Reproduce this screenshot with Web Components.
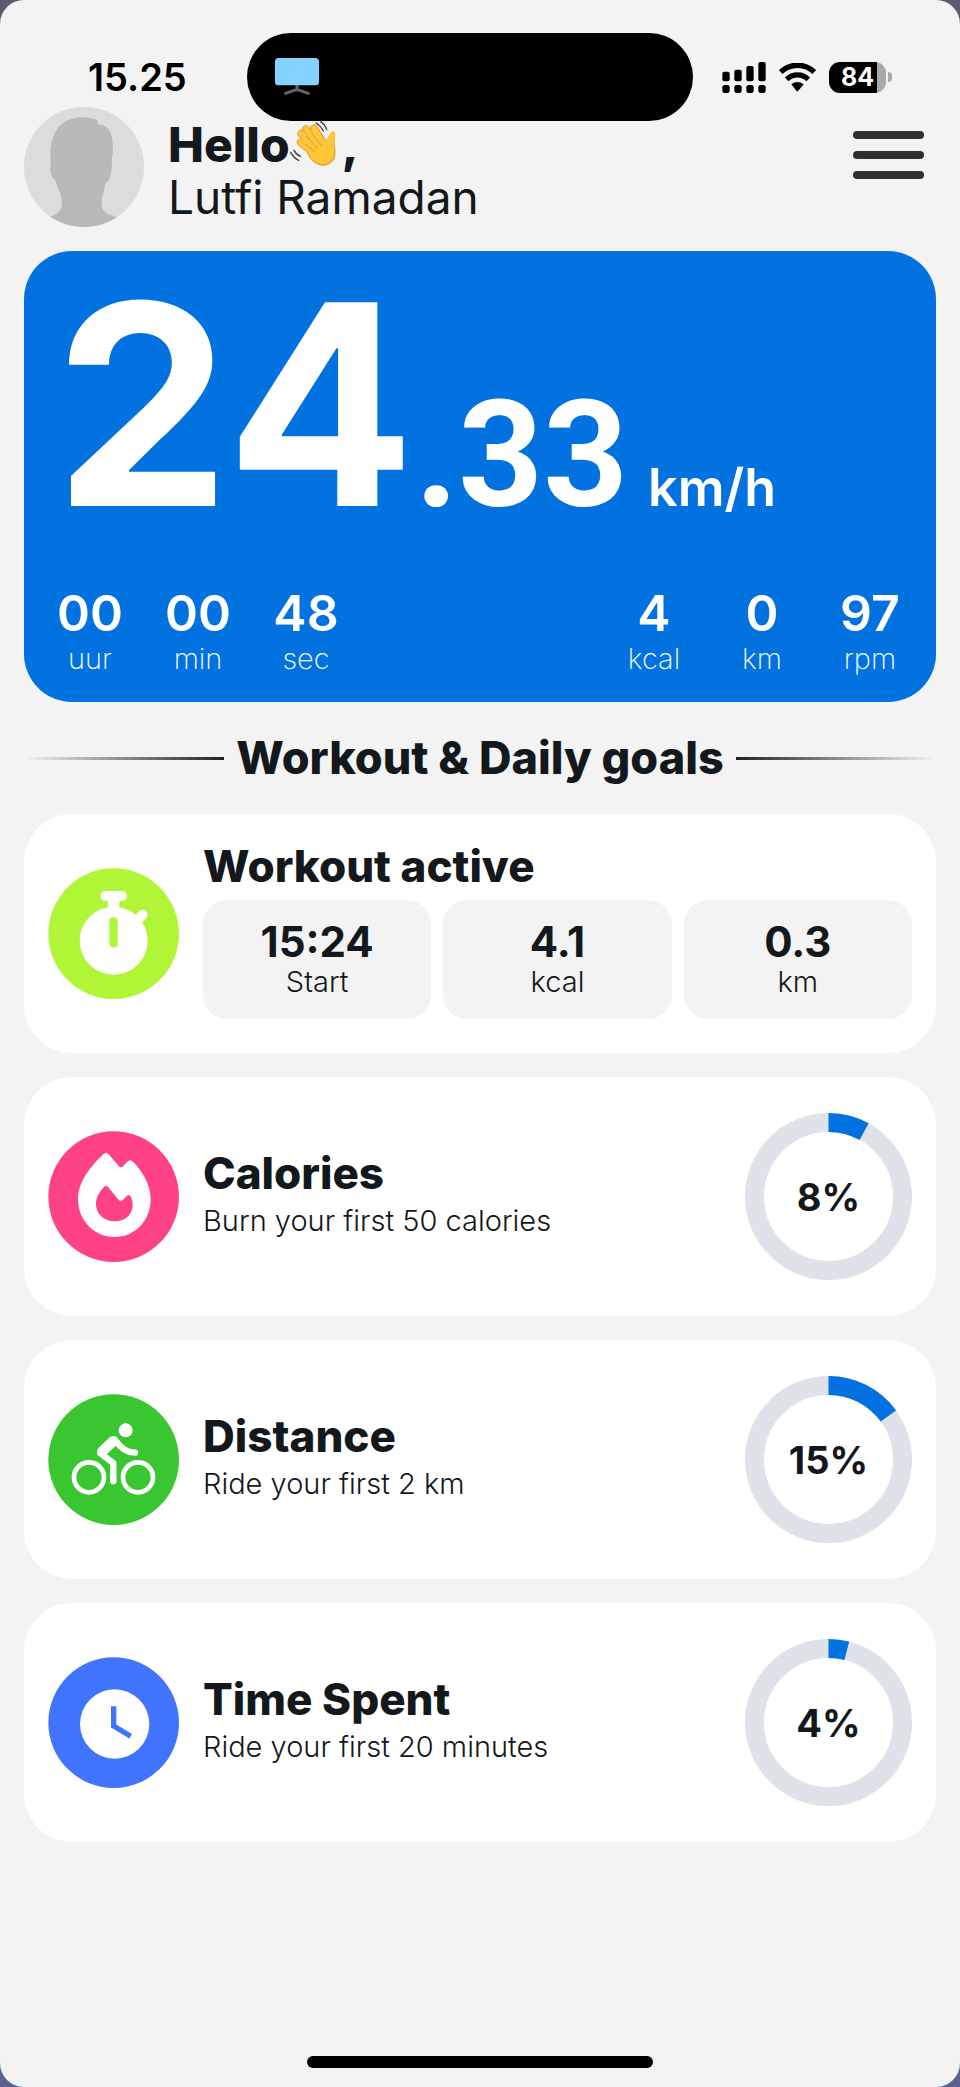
<!DOCTYPE html>
<html lang="en">
<head>
<meta charset="utf-8">
<meta name="viewport" content="width=device-width, initial-scale=1">
<title>Ride dashboard</title>
<style>
    :root {
        --color-primary: #0272e0;
        --color-text: #12181b;
        --color-page: #f3f3f3;
        --color-track: #dfe2e8;
    }

    html {
        background: linear-gradient(#5d5a6e, #5a6390);
    }

    body {
        margin: 0;
        font-family: Inter, "Open Sans", sans-serif;
        color: var(--color-text);
    }
</style>
</head>
<body>
    <ride-app>
        <status-bar slot="status" time="15.25" battery="84"></status-bar>
        <user-header name="Lutfi Ramadan">Hello</user-header>
        <speed-card whole="24" fraction=".33" unit="km/h">
            <ride-stat slot="time" value="00">uur</ride-stat>
            <ride-stat slot="time" value="00">min</ride-stat>
            <ride-stat slot="time" value="48">sec</ride-stat>
            <ride-stat slot="totals" value="4">kcal</ride-stat>
            <ride-stat slot="totals" value="0">km</ride-stat>
            <ride-stat slot="totals" value="97">rpm</ride-stat>
        </speed-card>
        <section-title>Workout &amp; Daily goals</section-title>
        <goal-card icon="stopwatch" heading="Workout active">
            <stat-tile value="15:24">Start</stat-tile>
            <stat-tile value="4.1">kcal</stat-tile>
            <stat-tile value="0.3">km</stat-tile>
        </goal-card>
        <goal-card icon="fire" heading="Calories" text="Burn your first 50 calories">
            <progress-ring slot="end" value="8"></progress-ring>
        </goal-card>
        <goal-card icon="bike" heading="Distance" text="Ride your first 2 km">
            <progress-ring slot="end" value="15"></progress-ring>
        </goal-card>
        <goal-card icon="clock" heading="Time Spent" text="Ride your first 20 minutes">
            <progress-ring slot="end" value="4"></progress-ring>
        </goal-card>
    </ride-app>

<script>
// All badge icons are drawn on the same 393 x 393 disc
const ICONS = {
    stopwatch: {
        color: '#b0f536',
        shape: `
            <circle cx="197" cy="218" r="102"/>
            <rect x="158" y="69" width="78" height="30" rx="13"/>
            <rect x="180" y="90" width="34" height="40"/>
            <path d="M266 158 284 140" stroke="#fff" stroke-width="30" stroke-linecap="round"/>
            <rect x="184" y="148" width="25" height="90" rx="12" fill="#b0f536"/>`
    },
    fire: {
        color: '#ff4186',
        shape: `
            <path d="M166 70Q174 61 182 70L212 105Q219 113 226 105L238 92Q246 83 255 92C282 119 308 160 308 204C308 270 260 318 200 318C140 318 90 270 90 204C90 152 130 104 166 70Z"/>
            <path fill="#ff4186" d="M167 169Q174 161 181 169L210 205Q218 215 227 205L234 197Q243 187 249 198C252 205 254 214 254 222C254 252 230 271 200 271C169 271 144 250 144 219C144 199 155 182 167 169Z"/>`
    },
    bike: {
        color: '#39c631',
        shape: `
            <circle cx="233" cy="109" r="21"/>
            <g fill="none" stroke="#fff" stroke-linecap="round" stroke-linejoin="round">
                <circle cx="123" cy="250" r="45" stroke-width="14"/>
                <circle cx="270" cy="250" r="45" stroke-width="14"/>
                <path stroke-width="31" d="M163 172 195 142"/>
                <path stroke-width="19" d="M201 137Q226 175 261 176"/>
                <path stroke-width="19" d="M157 178 196 207V262"/>
            </g>`
    },
    clock: {
        color: '#4074ff',
        shape: `
            <circle cx="200" cy="201" r="104"/>
            <path d="M197 148V207L248 238" fill="none" stroke="#4074ff" stroke-width="16"/>`
    }
};

class RideApp extends HTMLElement {
    constructor() {
        super();
        this.attachShadow({ mode: 'open' });
        this.shadowRoot.innerHTML = `
            <style>
                :host {
                    display: flex;
                    flex-direction: column;
                    box-sizing: border-box;
                    min-height: 100vh;
                    padding-bottom: 19px;
                    border-radius: 24px;
                    background: var(--color-page);
                }

                main {
                    display: flex;
                    flex-direction: column;
                    gap: 24px;
                    /* the header slides a little under the island */
                    margin-top: -14px;
                    padding: 0 24px 24px;
                }

                .home {
                    width: 36%;
                    height: 12px;
                    margin: auto auto 0;
                    border-radius: 6px;
                    background: #000;
                }
            </style>
            <slot name="status"></slot>
            <main><slot></slot></main>
            <div class="home"></div>
        `;
    }
}

class StatusBar extends HTMLElement {
    constructor() {
        super();
        this.attachShadow({ mode: 'open' });
        this.shadowRoot.innerHTML = `
            <style>
                :host {
                    position: relative;
                    z-index: 1;
                    display: grid;
                    grid-template-columns: 247px 1fr 267px;
                    align-items: center;
                    padding-top: 33px;
                    color: #000;
                }

                time {
                    padding-left: 88px;
                    font-size: 38px;
                    line-height: 36px;
                    font-weight: 600;
                }

                .island {
                    display: flex;
                    align-items: center;
                    height: 88px;
                    padding-left: 28px;
                    border-radius: 44px;
                    background: #000;
                }

                .signals {
                    display: flex;
                    align-items: center;
                    gap: 13px;
                    padding-left: 29px;
                }

                .battery {
                    display: flex;
                    align-items: center;
                    gap: 2px;
                }

                .cell {
                    width: 57px;
                    border-radius: 11px;
                    background: linear-gradient(90deg, #000 84%, #a9a9a9 84%);
                    color: #fff;
                    font-size: 25px;
                    line-height: 31px;
                    font-weight: 700;
                    text-align: center;
                }

                .nub {
                    width: 4px;
                    height: 10px;
                    border-radius: 0 4px 4px 0;
                    background: #a9a9a9;
                }
            </style>
            <time></time>
            <div class="island">
                <svg width="44" height="38" viewBox="0 0 132 114">
                    <path d="M66 80v16M66 94 32 106M66 94 100 106" stroke="#666" stroke-width="9" stroke-linecap="round"/>
                    <rect width="132" height="82" rx="11" fill="#84d2ff"/>
                </svg>
            </div>
            <div class="signals">
                <svg width="44" height="31" viewBox="0 0 132 93">
                    <rect x="1" y="29" width="22" height="29" rx="6"/>
                    <rect x="37" y="23" width="22" height="35" rx="6"/>
                    <rect x="73" y="12" width="22" height="46" rx="6"/>
                    <rect x="109" width="22" height="58" rx="6"/>
                    <rect x="1" y="69" width="22" height="24" rx="7"/>
                    <rect x="37" y="69" width="22" height="24" rx="7"/>
                    <rect x="73" y="69" width="22" height="24" rx="7"/>
                    <rect x="109" y="69" width="22" height="24" rx="7"/>
                </svg>
                <svg width="37" height="29" viewBox="0 0 111 87">
                    <path d="M5 27C33 0 78 0 106 27M23 49C42 31 69 31 88 49" fill="none" stroke="#000" stroke-width="16"/>
                    <path d="M37 64Q55 50 74 64L58 83Q55 86 52 83Z"/>
                </svg>
                <div class="battery"><div class="cell"></div><div class="nub"></div></div>
            </div>
        `;
    }

    connectedCallback() {
        this.shadowRoot.querySelector('time').textContent = this.getAttribute('time');
        this.shadowRoot.querySelector('.cell').textContent = this.getAttribute('battery');
    }
}

class UserHeader extends HTMLElement {
    constructor() {
        super();
        this.attachShadow({ mode: 'open' });
        this.shadowRoot.innerHTML = `
            <style>
                :host {
                    display: flex;
                    align-items: flex-start;
                    gap: 24px;
                }

                .avatar {
                    flex: none;
                    border-radius: 50%;
                    background: #dcdcdc;
                }

                .names {
                    flex: 1;
                    padding-top: 12px;
                }

                .hello {
                    display: flex;
                    align-items: center;
                    font-size: 48px;
                    line-height: 52px;
                    font-weight: 800;
                }

                .hello span {
                    padding-left: 4px;
                }

                .name {
                    font-size: 46px;
                    line-height: 52px;
                    font-weight: 400;
                }

                button {
                    display: grid;
                    gap: 12px;
                    margin: 24px 12px 0 0;
                    padding: 0;
                    border: 0;
                    background: none;
                    cursor: pointer;
                }

                button span {
                    width: 71px;
                    height: 8px;
                    border-radius: 4px;
                    background: #2f2f2f;
                }
            </style>
            <svg class="avatar" width="120" height="120" viewBox="0 0 359 359">
                <path fill="#b9b9b9" d="M80 163C74 90 100 31 175 31C195 31 210 35 220 40L222 54C235 48 262 60 265 105C268 135 264 150 262 163C266 180 258 205 255 219C248 222 246 225 243 232C240 260 232 265 232 285C230 315 250 320 279 330L279 359H78V330C100 318 115 315 113 280C110 250 98 240 94 218C82 215 76 190 80 163Z"/>
            </svg>
            <div class="names">
                <div class="hello">
                    <slot></slot>
                    <svg width="48" height="52" viewBox="0 0 144 156" fill="none" stroke-linecap="round" stroke-linejoin="round">
                        <g stroke="#e59a1c" stroke-width="23">
                            <path d="M86 102 34 44M96 92 48 30M110 88 72 28M82 112 32 70"/>
                        </g>
                        <path d="M128 46C110 76 112 66 84 76L54 92C66 126 90 136 104 134C136 126 132 96 128 84C126 72 130 60 128 46Z" fill="#ffc63b" stroke="#f0a827" stroke-width="13"/>
                        <g stroke="#ffc63b" stroke-width="18">
                            <path d="M82 112 32 70M86 102 34 44M96 92 48 30M106 84 72 28"/>
                        </g>
                        <path d="M129 44C112 76 108 70 84 80L62 96C72 124 90 130 102 128C130 122 126 98 124 84C123 70 128 60 129 44Z" fill="#ffc63b" stroke="#ffc63b" stroke-width="14"/>
                        <path d="M50 52 82 88M66 44 94 80M46 76 74 98" stroke="#e59a1c" stroke-width="3"/>
                        <path d="M2 100Q10 116 26 124M12 94Q18 106 32 112M78 12Q92 20 100 36M92 8Q106 18 110 32" stroke="#444" stroke-width="4"/>
                    </svg>
                    <span>,</span>
                </div>
                <div class="name"></div>
            </div>
            <button aria-label="Menu"><span></span><span></span><span></span></button>
        `;
    }

    connectedCallback() {
        this.shadowRoot.querySelector('.name').textContent = this.getAttribute('name');
    }
}

class SpeedCard extends HTMLElement {
    constructor() {
        super();
        this.attachShadow({ mode: 'open' });
        this.shadowRoot.innerHTML = `
            <style>
                :host {
                    display: block;
                    padding: 40px 24px 24px;
                    border-radius: 48px;
                    background: var(--color-primary);
                    color: #fff;
                }

                .speed {
                    display: flex;
                    align-items: baseline;
                    padding-left: 6px;
                    font-weight: 600;
                }

                .whole {
                    font-size: 280px;
                    line-height: 228px;
                    font-weight: 700;
                }

                .fraction {
                    font-family: Roboto, sans-serif;
                    font-size: 148px;
                    line-height: 148px;
                    font-weight: 700;
                }

                .unit {
                    padding-left: 20px;
                    font-size: 52px;
                    line-height: 52px;
                }

                .stats {
                    display: flex;
                    justify-content: space-between;
                    padding-top: 56px;
                }

                .group {
                    display: flex;
                    gap: 24px;
                }
            </style>
            <div class="speed">
                <span class="whole"></span><span class="fraction"></span><span class="unit"></span>
            </div>
            <div class="stats">
                <div class="group"><slot name="time"></slot></div>
                <div class="group"><slot name="totals"></slot></div>
            </div>
        `;
    }

    connectedCallback() {
        for (const part of ['whole', 'fraction', 'unit']) {
            this.shadowRoot.querySelector('.' + part).textContent = this.getAttribute(part);
        }
    }
}

class RideStat extends HTMLElement {
    constructor() {
        super();
        this.attachShadow({ mode: 'open' });
        this.shadowRoot.innerHTML = `
            <style>
                :host {
                    display: block;
                    min-width: 84px;
                    text-align: center;
                    font-size: 29px;
                    line-height: 38px;
                    font-weight: 200;
                }

                b {
                    display: block;
                    font-size: 50px;
                    line-height: 54px;
                    font-weight: 600;
                }
            </style>
            <b></b>
            <slot></slot>
        `;
    }

    connectedCallback() {
        this.shadowRoot.querySelector('b').textContent = this.getAttribute('value');
    }
}

class SectionTitle extends HTMLElement {
    constructor() {
        super();
        this.attachShadow({ mode: 'open' });
        this.shadowRoot.innerHTML = `
            <style>
                :host {
                    display: flex;
                    align-items: center;
                    gap: 12px;
                    padding: 8px 0;
                }

                h2 {
                    margin: 0;
                    font-size: 45px;
                    line-height: 48px;
                    font-weight: 800;
                }

                span {
                    flex: 1;
                    height: 3px;
                    background: linear-gradient(90deg, transparent, #222);
                }

                span:last-child {
                    background: linear-gradient(270deg, transparent, #222);
                }
            </style>
            <span></span>
            <h2><slot></slot></h2>
            <span></span>
        `;
    }
}

class GoalCard extends HTMLElement {
    constructor() {
        super();
        this.attachShadow({ mode: 'open' });
        this.shadowRoot.innerHTML = `
            <style>
                :host {
                    display: flex;
                    align-items: center;
                    gap: 24px;
                    box-sizing: border-box;
                    min-height: 239px;
                    padding: 24px;
                    border-radius: 48px;
                    background: #fff;
                }

                svg {
                    flex: none;
                }

                .body {
                    flex: 1;
                }

                h3 {
                    margin: 0;
                    font-size: 44px;
                    line-height: 36px;
                    font-weight: 800;
                }

                p {
                    margin: 12px 0 0;
                    font-size: 29px;
                    line-height: 36px;
                    font-weight: 300;
                }

                .tiles {
                    display: grid;
                    grid-auto-flow: column;
                    grid-auto-columns: 1fr;
                    gap: 12px;
                    margin-top: 16px;
                }
            </style>
            <svg width="131" height="131" viewBox="0 0 393 393" fill="#fff"></svg>
            <div class="body">
                <h3></h3>
            </div>
            <slot name="end"></slot>
        `;
    }

    connectedCallback() {
        const icon = ICONS[this.getAttribute('icon')];
        const body = this.shadowRoot.querySelector('.body');
        this.shadowRoot.querySelector('svg').innerHTML =
            `<circle cx="197" cy="197" r="196" fill="${icon.color}"/>${icon.shape}`;
        this.shadowRoot.querySelector('h3').textContent = this.getAttribute('heading');

        // A goal has a line of text, the active workout has tiles instead
        if (this.hasAttribute('text')) {
            const text = document.createElement('p');
            text.textContent = this.getAttribute('text');
            body.appendChild(text);
        } else {
            const tiles = document.createElement('div');
            tiles.className = 'tiles';
            tiles.appendChild(document.createElement('slot'));
            body.appendChild(tiles);
        }
    }
}

class StatTile extends HTMLElement {
    constructor() {
        super();
        this.attachShadow({ mode: 'open' });
        this.shadowRoot.innerHTML = `
            <style>
                :host {
                    display: block;
                    padding: 20px 12px 19px;
                    border-radius: 24px;
                    background: var(--color-page);
                    text-align: center;
                    font-size: 29px;
                    line-height: 36px;
                    font-weight: 300;
                }

                b {
                    display: block;
                    font-size: 42px;
                    line-height: 44px;
                    font-weight: 700;
                }
            </style>
            <b></b>
            <slot></slot>
        `;
    }

    connectedCallback() {
        this.shadowRoot.querySelector('b').textContent = this.getAttribute('value');
    }
}

class ProgressRing extends HTMLElement {
    constructor() {
        super();
        this.attachShadow({ mode: 'open' });
        this.shadowRoot.innerHTML = `
            <style>
                :host {
                    display: grid;
                    place-items: center;
                    flex: none;
                }

                svg, span {
                    grid-area: 1 / 1;
                }

                circle {
                    fill: none;
                    stroke: var(--color-track);
                    stroke-width: 19px;
                }

                .value {
                    stroke: var(--color-primary);
                }

                span {
                    font-size: 38px;
                    line-height: 40px;
                    font-weight: 700;
                }
            </style>
            <svg width="167" height="167" viewBox="0 0 167 167">
                <circle cx="83.5" cy="83.5" r="74"/>
                <circle class="value" cx="83.5" cy="83.5" r="74" pathLength="100" transform="rotate(-90 83.5 83.5)"/>
            </svg>
            <span></span>
        `;
    }

    connectedCallback() {
        const value = this.getAttribute('value');
        this.shadowRoot.querySelector('.value').setAttribute('stroke-dasharray', `${value} 100`);
        this.shadowRoot.querySelector('span').textContent = value + '%';
    }
}

customElements.define('ride-app', RideApp);
customElements.define('status-bar', StatusBar);
customElements.define('user-header', UserHeader);
customElements.define('speed-card', SpeedCard);
customElements.define('ride-stat', RideStat);
customElements.define('section-title', SectionTitle);
customElements.define('goal-card', GoalCard);
customElements.define('stat-tile', StatTile);
customElements.define('progress-ring', ProgressRing);
</script>
</body>
</html>
